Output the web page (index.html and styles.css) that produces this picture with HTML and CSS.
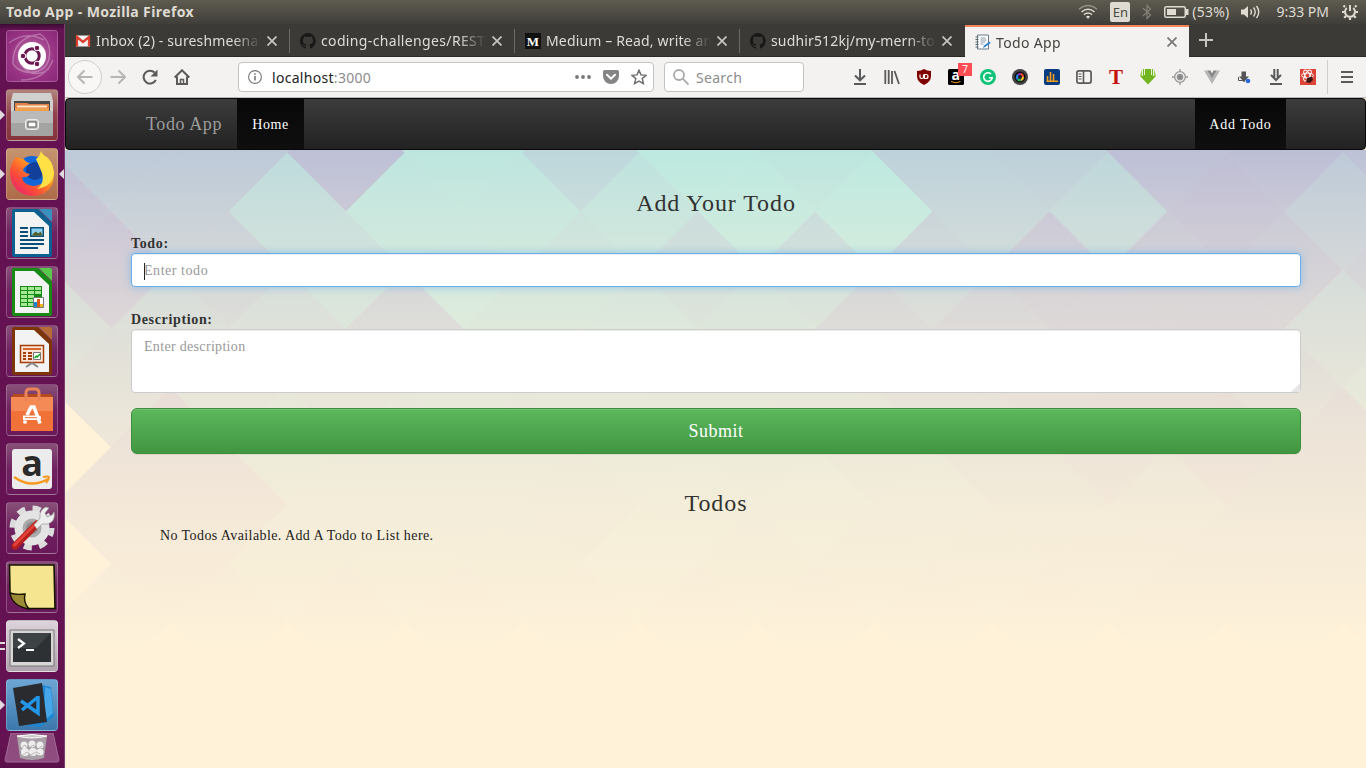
FILE: index.html
```html
<!DOCTYPE html>
<html lang="en">
<head>
<meta charset="utf-8">
<title>Todo App</title>
<link rel="stylesheet" href="styles.css">
</head>
<body>
<header class="panel">
  <span class="panel-title">Todo App - Mozilla Firefox</span>
  <div class="indicators">
    <svg width="20" height="16" viewBox="0 0 20 16" fill="none" stroke="#dfdbd2" stroke-width="1.5"><path d="M1 5.2Q10-2 19 5.2" opacity=".45"/><path d="M3.5 8Q10 2.700 16.500 8M6 10.700Q10 7.500 14 10.700"/><path d="M8 12.500Q10 11 12 12.500L10 15z" fill="#dfdbd2" stroke="none"/></svg>
    <span class="ind-lang">En</span>
    <svg class="ind-bt" width="10" height="16" viewBox="0 0 10 16" fill="none" stroke="#85827a" stroke-width="1.200"><path d="M1 4l7.500 7L5 14.500v-13L8.500 5 1 12"/></svg>
    <svg class="ind-bat" width="25" height="14" viewBox="0 0 25 14"><rect x=".75" y="1.750" width="20.500" height="10.500" rx="1.500" fill="none" stroke="#dfdbd2" stroke-width="1.500"/><path d="M3 4h9v6H3zM22 4h2.500v6H22z" fill="#dfdbd2"/></svg>
    <span class="ind-pct">(53%)</span>
    <svg class="ind-vol" width="21" height="16" viewBox="0 0 21 16"><path d="M1 5.500h3L8 2v12l-4-3.500H1z" fill="#dfdbd2"/><path d="M10.500 5.500q2 2.500 0 5M13.500 3.500q3.500 4.500 0 9M16.500 2q4.500 6 0 12" fill="none" stroke="#dfdbd2" stroke-width="1.400"/></svg>
    <span class="ind-time">9:33 PM</span>
    <svg class="ind-gear" width="18" height="18" viewBox="-9 -9 18 18" fill="none" stroke="#dfdbd2"><path d="M-3.200-4A5 5 0 1 0 3.200-4M0-7V-1" stroke-width="2"/><path d="M-5-5l-1.500-1.500M5-5l1.500-1.500M-5.500 0H-8M5.500 0H8M-4 4l-1.800 1.800M4 4l1.800 1.800M0 5.500V8" stroke-width="2.200"/></svg>
  </div>
</header>

<div class="desktop">
<nav class="launcher">
  <div class="tile dash"><svg viewBox="0 0 52 52"><g fill="none" stroke="#fff" stroke-opacity=".28" stroke-width="1.500"><path d="M7 34Q6 8 34 4Q46 12 43 29Q39 44 20 42Q11 40 7 34M3 13Q20 0 38 10M15 50Q39 50 47 30M17 37Q28 49 43 39"/></g><circle cx="26" cy="26" r="14" fill="#fff"/><circle cx="26" cy="26" r="7.200" fill="none" stroke="#6a1a50" stroke-width="3"/><g fill="#6a1a50" stroke="#fff"><circle cx="17" cy="26" r="2.800"/><circle cx="31" cy="18" r="2.800"/><circle cx="31" cy="34" r="2.800"/></g></svg></div>
  <div class="tile files"><i class="run"></i><svg viewBox="0 0 52 52"><path d="M7 4h38l2 8v12H5V12z" fill="#d0d0ce"/><path d="M8 12h36v12H8z" fill="#4a4a48"/><path d="M9 14h12l2 1h20v7H9z" fill="#e2804a"/><path d="M11 16.500h30v2H11z" fill="#fbe8c8"/><path d="M9 19h34v4H9z" fill="#f0a04c"/><path d="M5 22h42v24q0 1-1 1H6q-1 0-1-1z" fill="#a4a4a2"/><path d="M5 22h42v12H5z" fill="#bababa"/><rect x="19.500" y="30.500" width="13" height="10" rx="2.500" fill="#c8c8c6" stroke="#eee"/><rect x="22" y="33" width="8" height="5" fill="#fff" stroke="#555"/></svg></div>
  <div class="tile firefox"><i class="run"></i><i class="focus"></i><svg viewBox="0 0 52 52"><defs><linearGradient id="fx" x1="1" y1="0" x2="0" y2="1"><stop offset="0" stop-color="#ffd93b"/><stop offset=".35" stop-color="#ff9a1f"/><stop offset=".65" stop-color="#fb4b38"/><stop offset="1" stop-color="#e31587"/></linearGradient></defs><circle cx="26" cy="24" r="16" fill="#1267d8"/><circle cx="29" cy="23" r="9" fill="#123f99"/><path d="M10 9q-6 7-6 17 2 20 22 22 21-1 22-21 0-6-3-10-1 20-18 21-10-1-11-9 5 1 8-3-6-1-7-4 0-2 7-7-5-1-6-4l-5-1z" fill="url(#fx)"/><path d="M35 3q-1 5-5 8 4 9 6 14 3 10-5 16 17-3 17-17Q46 11 39 8q-3-2-4-5" fill="#ffe045"/></svg></div>
  <div class="tile"><svg viewBox="0 0 52 52"><path d="M6 4q0-2 2-2h24l14 14v32q0 2-2 2H8q-2 0-2-2z" fill="#0d6191"/><path d="M9 5h19l15 14v28H9z" fill="#f3f3f3"/><path d="M33 2h11q2 0 2 2v11z" fill="#3790bd"/><g stroke="#0a4f78" stroke-width="2"><path d="M14 21h8M14 25h8M14 29h8M14 33h24M14 37h24M14 41h18"/></g><path d="M24 20h14v10H24z" fill="#0a4f78"/><path d="M25.500 21.500h11v7h-11z" fill="#8bd0ef"/><path d="M25.500 28.500l4-4 3 2 2-2 2 4z" fill="#565c20"/></svg></div>
  <div class="tile"><svg viewBox="0 0 52 52"><path d="M6 4q0-2 2-2h24l14 14v32q0 2-2 2H8q-2 0-2-2z" fill="#178a14"/><path d="M9 5h19l15 14v28H9z" fill="#f3f3f3"/><path d="M33 2h11q2 0 2 2v11z" fill="#58c94a"/><path d="M14 20h22v21H14z" fill="#168b14"/><g fill="#a5e898"><path d="M15 21h6v3h-6zM22 21h6v3h-6zM29 21h6v3h-6zM15 25h6v3h-6zM22 25h6v3h-6zM29 25h6v3h-6zM15 29h6v3h-6zM22 29h6v3h-6zM15 33h6v3h-6zM22 33h6v3h-6zM15 37h6v3h-6zM22 37h6v3h-6z"/></g><path d="M27.500 31.500h10v10h-10z" fill="#fff" stroke="#777"/><path d="M28 36h3v5h-3z" fill="#1787d1"/><path d="M31 33h3v8h-3z" fill="#d85c16"/><path d="M34 38h3v3h-3z" fill="#eeb620"/></svg></div>
  <div class="tile"><svg viewBox="0 0 52 52"><path d="M6 4q0-2 2-2h24l14 14v32q0 2-2 2H8q-2 0-2-2z" fill="#7d3508"/><path d="M9 5h19l15 14v28H9z" fill="#f3f3f3"/><path d="M33 2h11q2 0 2 2v11z" fill="#b66b38"/><path d="M14.500 20.500h23v17h-23z" fill="#fce5d8" stroke="#a33e08" stroke-width="1.500"/><path d="M17 24h18" stroke="#d56b28" stroke-width="2"/><path d="M17 28h3M22 28h4M17 31h3M22 31h4M17 34h3M22 34h4" stroke="#a33e08" stroke-width="2"/><path d="M27.500 27.500h7v7h-7z" fill="#fff" stroke="#777"/><path d="M28.500 33l2-2 1 1 2.500-3" fill="none" stroke="#17a52a" stroke-width="1.500"/><path d="M20 42l6-4 6 4" fill="none" stroke="#888" stroke-width="2"/></svg></div>
  <div class="tile"><svg viewBox="0 0 52 52"><path d="M5 13l3-3h37l2 3z" fill="#b54a1e"/><path d="M5 13h42v34H5z" fill="#f07238"/><path d="M5 13h42v14H5z" fill="#f48a55"/><path d="M20 17V9q0-4 4-4h5q4 0 4 4v8" fill="none" stroke="#e98459" stroke-width="3"/><path d="M18.500 39.500l1-3M24 23h4l5 13.500M33 36.500l1 3M21 31l4-8" fill="none" stroke="#fff" stroke-width="3.500"/><path d="M17 31.500h15q3 0 3 2.200t-3 2.200H17z" fill="#fff"/><path d="M19 33.200h12v1H19z" fill="#f07238"/></svg></div>
  <div class="tile"><svg viewBox="0 0 52 52"><rect x="6" y="6" width="40" height="40" rx="3" fill="#ececec"/><text x="26" y="33" font-size="36" class="amz" text-anchor="middle">a</text><path d="M8 34q17 12 34 2" fill="none" stroke="#f69a1f" stroke-width="2.600"/><path d="M37 34q5-1 6 0 0 3-3 6" fill="none" stroke="#f69a1f" stroke-width="2"/></svg></div>
  <div class="tile"><svg viewBox="0 0 52 52"><circle cx="26" cy="26" r="19.500" fill="none" stroke="#dcdcdc" stroke-width="6" stroke-dasharray="8 7.310"/><circle cx="26" cy="26" r="13.500" fill="#aaa" stroke="#e4e4e4" stroke-width="8"/><circle cx="26" cy="26" r="6" fill="#8a8a8a"/><path d="M9 44L31 22" stroke="#b7201d" stroke-width="7" stroke-linecap="round"/><path d="M8.500 43L30 21.500" stroke="#e3423a" stroke-width="3" stroke-linecap="round"/><path d="M28 23l6-7q-1-8 6-11l3 1-4 5 2 4 5-2 2-3q2 9-6 12l-6 0-5 5z" fill="#eee" stroke="#999" stroke-width=".7"/></svg></div>
  <div class="tile"><svg viewBox="0 0 52 52"><path d="M3.500 4h44.500l1 43.500H22L4 32z" fill="#f5e590" stroke="#151200" stroke-width="1.600"/><path d="M4 32q6 2 15 1-2 8 4 15Q6 45 4 32" fill="#9b8b35" stroke="#151200" stroke-width="1.400"/></svg></div>
  <div class="tile terminal"><i class="run two"></i><svg viewBox="0 0 52 52"><path d="M4 10h44v36H4z" fill="#d7d5d5" stroke="#777"/><path d="M7 13h38v29H7z" fill="#2d3133"/><path d="M7 13h38L30 28H7z" fill="#3d4244"/><path d="M12 19l6 4.500-6 4.500M20 30h8" stroke="#fff" stroke-width="2.200" fill="none"/></svg></div>
  <div class="tile code"><i class="run"></i><svg viewBox="0 0 52 52"><path d="M36 6l9 2 3 30-14 10-17-2 20-5z" fill="#1f85cf"/><path d="M39 8l6 2 2 24-9 8z" fill="#46a6e8"/><path d="M7 9l29-5 5 39-28 4z" fill="#2a2b2f"/><path d="M32 17v17L15 22M32 18L16 31" fill="none" stroke="#2396e8" stroke-width="3.500"/></svg></div>
  <div class="trash"><svg viewBox="0 0 56 30"><path d="M7 0h42l6 27q0 2-2 2H3q-2 0-2-2z" fill="#8e4c7f" stroke="#a36b96"/><path d="M13 3h30l-3 22q-12 4-24 0z" fill="#a99fa6"/><path d="M13 3q15-3 30 0-15 4-30 0" fill="#ccc" stroke="#fff"/><g fill="#eee"><circle cx="20" cy="12" r="3.500"/><circle cx="28" cy="11" r="3.500"/><circle cx="36" cy="12" r="3.500"/><circle cx="21" cy="19" r="4"/><circle cx="29" cy="19" r="4"/><circle cx="36" cy="19" r="3.500"/></g><path d="M17 15l4-3 3 4 5-4 5 4 4-3M19 22l4-3 4 3 5-3 4 2" fill="none" stroke="#aaa" stroke-width=".8"/></svg></div>
</nav>

<main class="window">
  <div class="tabs">
    <div class="tab">
      <svg class="fav" viewBox="0 0 16 16"><path d="M1 2.500h14v11H1z" fill="#f4f4f4"/><path d="M2 13.500V4l6 5 6-5v9.500" fill="none" stroke="#d9402f" stroke-width="2.300"/></svg>
      <span class="tab-text">Inbox (2) - sureshmeena5</span><svg class="x" viewBox="0 0 10 10"><path d="M.5.5l9 9M9.500.5l-9 9"/></svg>
    </div>
    <div class="tab">
      <svg class="fav" viewBox="0 0 16 16"><use href="#gh"/></svg>
      <span class="tab-text wide">coding-challenges/REST-</span><svg class="x" viewBox="0 0 10 10"><path d="M.5.5l9 9M9.500.5l-9 9"/></svg>
    </div>
    <div class="tab">
      <svg class="fav" viewBox="0 0 16 16"><path d="M0 0h16v16H0z" fill="#111"/><text x="8" y="12.500" text-anchor="middle" class="med">M</text></svg>
      <span class="tab-text">Medium – Read, write an</span><svg class="x" viewBox="0 0 10 10"><path d="M.5.5l9 9M9.500.5l-9 9"/></svg>
    </div>
    <div class="tab">
      <svg class="fav" viewBox="0 0 16 16"><path id="gh" d="M8 0a8 8 0 0 0-2.500 15.600c.4 0 .5-.2.500-.4v-1.500c-2.200.5-2.700-1-2.700-1-.4-.9-.9-1.200-.9-1.200-.7-.5.100-.5.100-.5.800.100 1.200.8 1.200.8.700 1.200 1.900.9 2.300.7.100-.5.300-.9.500-1.100-1.800-.2-3.600-.9-3.600-4 0-.9.300-1.600.8-2.100-.100-.2-.4-1 .100-2.100 0 0 .7-.2 2.200.8a7.600 7.600 0 0 1 4 0c1.500-1 2.200-.8 2.200-.8.4 1.100.2 1.900.100 2.100.5.6.8 1.300.8 2.200 0 3.100-1.900 3.700-3.700 3.900.3.300.6.800.6 1.500v2.200c0 .2.100.5.500.4A8 8 0 0 0 8 0z" fill="#191717"/></svg>
      <span class="tab-text">sudhir512kj/my-mern-to</span><svg class="x" viewBox="0 0 10 10"><path d="M.5.5l9 9M9.500.5l-9 9"/></svg>
    </div>
    <div class="tab active">
      <svg class="fav" viewBox="0 0 16 16"><path d="M2.500 1h11v14h-11z" fill="#fff" stroke="#677888"/><path d="M.5 3h3M.5 5.500h3M.5 8h3M.5 10.500h3M.5 13h3" stroke="#566"/><path d="M5.500 4h5M5.500 6h6M5.500 8h5M5.500 10h3" stroke="#89a"/><path d="M8 14l1-2.500 5.500-4 1.200 1.500-5.500 4z" fill="#3284cf"/></svg>
      <span class="tab-text wide">Todo App</span><svg class="x" viewBox="0 0 10 10"><path d="M.5.5l9 9M9.500.5l-9 9"/></svg>
    </div>
    <svg class="plus" viewBox="0 0 14 14"><path d="M7 0v14M0 7h14"/></svg>
  </div>

  <div class="toolbar">
    <span class="back"><svg viewBox="0 0 16 16"><path d="M15.500 8H1M7.500 1.500L1 8l6.500 6.500"/></svg></span>
    <svg class="nav-ic fwd" viewBox="0 0 16 16"><path d="M.5 8H15M8.500 1.500L15 8l-6.500 6.500"/></svg>
    <svg class="nav-ic dark" viewBox="0 0 16 16"><path d="M13.800 11A6.400 6.400 0 1 1 12.500 3.500"/><path d="M15.500 .5V7.500H8.500z" fill="#5a5a5a" stroke="none"/></svg>
    <svg class="nav-ic dark" viewBox="0 0 16 16"><path d="M.7 8.500L8 1.300l7.300 7.200M3 7.500V15h10V7.500" /><path d="M6.500 15v-4.500h3V15" stroke-width="1.500"/></svg>
    <div class="url">
      <svg class="info" viewBox="0 0 14 14"><circle cx="7" cy="7" r="6.400"/><path d="M7 6v4.500M7 3.200v1.600" stroke-width="1.600"/></svg>
      <span class="address">localhost<span class="port">:3000</span></span>
      <svg class="dots" viewBox="0 0 16 4"><circle cx="2" cy="2" r="1.900"/><circle cx="8" cy="2" r="1.900"/><circle cx="14" cy="2" r="1.900"/></svg>
      <svg class="pocket" viewBox="0 0 16 14"><path d="M1.500 0h13Q16 0 16 1.500V6A8 8 0 0 1 0 6V1.500Q0 0 1.500 0z" fill="#858585"/><path d="M4 4.800l4 3.800 4-3.800" fill="none" stroke="#fff" stroke-width="2" stroke-linecap="round"/></svg>
      <svg class="star" viewBox="0 0 16 16"><path d="M8 1.200l2 4.700 5 .4-3.800 3.300 1.200 5L8 12l-4.400 2.600 1.200-5L1 6.300l5-.4z"/></svg>
    </div>
    <div class="search"><svg class="lens" viewBox="0 0 16 16"><circle cx="6" cy="6" r="5"/><path d="M9.700 9.700L15.500 15.500"/></svg>Search</div>
    <div class="tools">
      <svg viewBox="0 0 16 16" class="ln"><path d="M8 0v11M3 6.500L8 11.300l5-4.800M2 15h12"/></svg>
      <svg viewBox="0 0 16 16" class="ln"><path d="M1.300 1v14M4.700 1v14M8 2v13M10.500 2l4.500 13" stroke-width="1.800"/></svg>
      <svg viewBox="0 0 16 16"><path d="M8 0q3 2 7 2v5q0 6-7 9-7-3-7-9V2q4 0 7-2" fill="#800000"/><path d="M4 5.500v2.500q0 1.500 1.700 1.500T7.500 8V5.500M8.500 9.500v-4H10q2 0 2 2t-2 2z" fill="none" stroke="#fff" stroke-width="1.200"/></svg>
      <span class="badged"><svg viewBox="0 0 16 16"><rect width="16" height="16" rx="1.500" fill="#000"/><text x="7.700" y="11" text-anchor="middle" class="amz2">a</text><path d="M3 12.500q5 2.600 9.500 0" stroke="#f69a1f" fill="none"/></svg><b class="badge">7</b></span>
      <svg viewBox="0 0 16 16"><circle cx="8" cy="8" r="8" fill="#11c37a"/><path d="M11 5A4.300 4.300 0 1 0 12.200 8.800H9" fill="none" stroke="#fff" stroke-width="1.600"/></svg>
      <svg viewBox="0 0 16 16"><circle cx="8" cy="8" r="8" fill="#454547"/><circle cx="8" cy="8" r="5.500" fill="#111"/><path d="M8 8L5.500 5a4 4 0 0 1 3.500-1z" fill="#aa2dd8"/><path d="M8 8l1-4a4 4 0 0 1 3 4z" fill="#f04c30"/><path d="M8 8h4a4 4 0 0 1-3 4z" fill="#f5c72b"/><path d="M8 8l1 4a4 4 0 0 1-4-1z" fill="#22b765"/><path d="M8 8l-3 3a4 4 0 0 1 .5-6z" fill="#2583ec"/><circle cx="8" cy="8" r="2" fill="#222"/></svg>
      <svg viewBox="0 0 16 16"><rect width="16" height="16" rx="2" fill="#073b80"/><path d="M3.500 12V7M6.500 12V3M9.500 12V5M2.500 12.200H14" stroke="#f39d1d" stroke-width="1.600"/></svg>
      <svg viewBox="0 0 16 16" class="ln"><rect x=".9" y="1.900" width="14.200" height="12.200" rx="2" stroke-width="1.700"/><path d="M7.500 2v12" stroke-width="1.600"/><path d="M2.500 5h3M2.500 7.500h3M2.500 10h3" stroke-width="1"/></svg>
      <svg viewBox="0 0 16 16"><text x="8" y="15" text-anchor="middle" class="tee">T</text></svg>
      <svg viewBox="0 0 16 16"><path d="M3 0h10v7h3l-8 8.500L0 7h3z" fill="#72b522"/><path d="M0 7l2-7v7zM16 7l-2-7v7z" fill="#95ce48"/><path d="M4.500 0v6M11.500 0v6" stroke="#e8f6d2"/></svg>
      <svg viewBox="0 0 16 16" fill="none" stroke="#999" stroke-width="1.300"><circle cx="8" cy="8" r="5.300"/><circle cx="8" cy="8" r="2.700" fill="#888"/><path d="M8 0v3M8 13v3M0 8h3M13 8h3"/></svg>
      <svg viewBox="0 0 16 16"><path d="M0 1.500h4l4 7 4-7h4L8 15z" fill="#b5b5b5"/><path d="M3.500 1.500h3L8 4.500l1.500-3h3L8 9z" fill="#858585"/></svg>
      <svg viewBox="0 0 16 16"><path d="M5.500 2.500h4.500v5h3l-5 5.500L3 7.500h2.500z" fill="#555"/><path d="M2.500 8v3.500H8V13" stroke="#555" fill="none"/><circle cx="12" cy="12" r="2.300" fill="#2768e8"/></svg>
      <svg viewBox="0 0 16 16" class="ln"><path d="M6.300 0v10M9.700 0v10M3 6l5 5 5-5M2 15h12"/></svg>
      <svg viewBox="0 0 16 16"><path d="M0 0h16v16H0z" fill="#dc4437"/><g fill="none" stroke="#fff"><ellipse cx="7.500" cy="6.500" rx="6" ry="2.400"/><ellipse cx="7.500" cy="6.500" rx="6" ry="2.400" transform="rotate(60 7.500 6.500)"/><ellipse cx="7.500" cy="6.500" rx="6" ry="2.400" transform="rotate(120 7.500 6.500)"/></g><path d="M7 9l5-1.500 1 3.500-3 3-4-1z" fill="#3b1512"/></svg>
    </div>
    <svg class="menu" viewBox="0 0 12 12"><path d="M0 1h12M0 6h12M0 11h12"/></svg>
  </div>

  <section class="page">
    <svg class="backdrop" width="1301" height="618" viewBox="65 150 1301 618">
      <defs><linearGradient id="fade" x1="0" y1="0" x2="0" y2="1">
        <stop offset="0" stop-color="#fff2d9" stop-opacity=".22"/>
        <stop offset=".11" stop-color="#fff2d9" stop-opacity=".39"/>
        <stop offset=".2" stop-color="#fff2d9" stop-opacity=".51"/>
        <stop offset=".31" stop-color="#fff2d9" stop-opacity=".64"/>
        <stop offset=".45" stop-color="#fff2d9" stop-opacity=".78"/>
        <stop offset=".6" stop-color="#fff2d9" stop-opacity=".88"/>
        <stop offset=".75" stop-color="#fff2d9" stop-opacity=".96"/>
        <stop offset=".81" stop-color="#fff2d9" stop-opacity="1"/>
      </linearGradient></defs>
      <g id="diamonds"></g>
      <rect x="65" y="150" width="1301" height="618" fill="url(#fade)"/>
      <path d="M65 402L111 447 65 493zM65 518L111 564 65 610z" fill="#fff2d9"/>
    </svg>
    <div class="navbar">
      <span class="brand">Todo App</span>
      <a class="link">Home</a>
      <a class="link add">Add Todo</a>
    </div>
    <div class="container">
      <h3 class="h-add">Add Your Todo</h3>
      <label class="lbl">Todo:</label>
      <div class="field focused">Enter todo</div>
      <label class="lbl second">Description:</label>
      <div class="field area">Enter description<svg class="grip" viewBox="0 0 9 9"><path d="M0 9L9 0v9z" fill="#e6e6e6"/></svg></div>
      <div class="submit">Submit</div>
      <h3 class="h-list">Todos</h3>
      <p class="empty">No Todos Available. Add A Todo to List here.</p>
    </div>
  </section>
</main>
</div>
<script src="backdrop.js"></script>
</body>
</html>
```
FILE: backdrop.js
```js
// Green channel of each diamond, row by row; alternate rows shift by half a column.
const rows = [
  [188, 190, 190, 226, 226, 228, 230, 200, 200, 178, 178, 178],
  [190, 190, 177, 226, 208, 230, 226, 200, 198, 177, 176, 180],
  [176, 190, 212, 225, 225, 222, 230, 230, 200, 206, 174, 190],
  [172, 190, 212, 224, 218, 207, 208, 195, 177, 178, 178, 184],
  [198, 196, 200, 188, 218, 216, 212, 186, 183, 176, 177, 198],
  [190, 198, 196, 208, 208, 207, 202, 186, 178, 172, 184, 208],
  [180, 168, 206, 202, 202, 208, 206, 198, 186, 172, 170, 176],
  [170, 170, 202, 204, 198, 210, 212, 202, 190, 186, 176, 176],
  [180, 170, 202, 205, 204, 214, 204, 200, 194, 188, 178, 176],
  [178, 178, 178, 180, 190, 184, 184, 182, 180, 176, 176, 176]
];
const half = 58.65;
const group = document.getElementById('diamonds');
rows.forEach((row, n) => row.forEach((g, i) => {
  const j = n - 1;
  const x = 287.3 + half * (2 * i - (j % 2 ? 4 : 3));
  const y = 153 + half * j;
  const p = document.createElementNS('http://www.w3.org/2000/svg', 'path');
  p.setAttribute('d', `M${x - half} ${y}l${half} ${-half} ${half} ${half} ${-half} ${half}z`);
  const c = `rgb(170,${g},${Math.round(213 + (g - 177) * 0.25)})`;
  p.setAttribute('fill', c);
  p.setAttribute('stroke', c);
  p.setAttribute('stroke-width', '.6');
  group.appendChild(p);
}));
```
FILE: styles.css
```css
* { box-sizing: border-box; }
body { margin: 0; width: 1366px; height: 768px; overflow: hidden; font-family: "Noto Sans", "Open Sans", sans-serif; font-size: 14px; }
svg { display: block; flex: none; }

.panel { height: 24px; display: flex; justify-content: space-between; align-items: center; padding-left: 6px; color: #dfdbd2; background: linear-gradient(#5e5b50, #3f3e39); }
.panel-title { font-weight: bold; letter-spacing: .4px; padding-bottom: 1px; }
.indicators { display: flex; align-items: center; padding-right: 7px; }
.ind-lang { margin-left: 12px; width: 20px; height: 20px; background: #dfdbd2; color: #4b4943; border-radius: 2px; text-align: center; line-height: 20px; font-size: 13px; }
.ind-bt { margin-left: 12px; }
.ind-bat { margin-left: 12px; }
.ind-pct { margin-left: 3px; letter-spacing: .2px; padding-bottom: 1px; }
.ind-vol { margin-left: 11px; }
.ind-time { margin-left: 15px; padding-bottom: 1px; }
.ind-gear { margin-left: 12px; }

.desktop { display: flex; height: 744px; }
.launcher { width: 65px; flex: none; background: linear-gradient(#3c0a32, #641252 6px, #641252 97%, #5a104a); border-right: 1px solid #7d3d6e; padding-top: 6px; display: flex; flex-direction: column; align-items: center; gap: 7px; padding-right: 1px; }
.tile { position: relative; width: 52px; height: 52px; border-radius: 4px; border: 1px solid rgba(255,255,255,.22); background: linear-gradient(#875078, #702260 50%, #6a1859); flex: none; }
.tile svg { width: 52px; height: 52px; margin: -1px; overflow: visible; }
.dash { background: radial-gradient(circle, #c98cbb, #9a3585 60%, #8a2878); }
.files { background: linear-gradient(#b0847c, #92404a 50%, #86343c); }
.firefox { background: linear-gradient(#c69470, #ae6a48); }
.terminal { background: linear-gradient(#ddd3da, #b0a3ad); }
.code { background: linear-gradient(#6da6d4, #3c78ac); }
.run { position: absolute; left: -7px; top: 20px; border: 5px solid transparent; border-left-color: #e0d9de; border-right: 0; }
.two { border: 0; width: 5px; height: 8px; top: 21px; border-top: 2px solid #e0d9de; border-bottom: 2px solid #e0d9de; }
.focus { position: absolute; right: -7px; top: 20px; border: 5px solid transparent; border-right-color: #e0d9de; border-left: 0; }
.trash { width: 56px; height: 30px; margin-top: -5px; }
.amz { font-family: "Open Sans", sans-serif; font-weight: bold; fill: #2a2a2a; }
.amz2 { font: bold 14px "Open Sans", sans-serif; fill: #fff; }
.med { font: bold 13px "Liberation Serif", serif; fill: #fff; }
.tee { font: bold 21px "Liberation Serif", serif; fill: #c4120f; }

.window { width: 1301px; display: flex; flex-direction: column; }
.tabs { height: 33px; flex: none; display: flex; background: #3b3a36; border-bottom: 1px solid #2a2926; border-top: 1px solid #3b3a36; color: #dedcd8; }
.tab { width: 225px; display: flex; align-items: center; padding-left: 10px; position: relative; }
.tab:not(.active):not(:nth-child(4))::after { content: ""; position: absolute; right: 0; top: 4px; height: 24px; width: 1px; background: #6b6a66; }
.fav { width: 16px; height: 16px; }
.tab-text { width: 167px; margin-left: 5px; overflow: hidden; white-space: nowrap; letter-spacing: .15px; -webkit-mask-image: linear-gradient(90deg, #000 82%, transparent 99%); mask-image: linear-gradient(90deg, #000 82%, transparent 99%); }
.wide { letter-spacing: .35px; }
.x { width: 10px; height: 10px; margin-left: 4px; fill: none; stroke: #c8c6c2; stroke-width: 1.700; }
.active { background: #f4f2f1; border-top: 2px solid #f4835a; color: #45433f; height: 32px; width: 224px; }
.active .x { stroke: #777; }
.plus { width: 14px; height: 14px; margin: 8px 0 0 10px; stroke: #c8c6c2; stroke-width: 2; }

.toolbar { height: 41px; flex: none; display: flex; align-items: center; background: #f4f2f1; border-bottom: 1px solid #bcbab8; padding-left: 3px; }
.back { width: 34px; height: 34px; border-radius: 50%; border: 1px solid #d0cecd; display: flex; align-items: center; justify-content: center; background: #f8f7f6; }
.back svg, .nav-ic { width: 16px; height: 16px; fill: none; stroke: #b8b6b5; stroke-width: 2; }
.fwd { margin-left: 8px; }
.nav-ic.dark { stroke: #5a5a5a; margin-left: 16px; }
.url { margin-left: 48px; width: 416px; height: 30px; background: #fff; border: 1px solid #c4c2c0; border-radius: 4px; display: flex; align-items: center; padding: 0 6px 0 9px; color: #222; }
.info { width: 14px; height: 14px; fill: none; stroke: #777; stroke-width: 1.100; }
.address { margin-left: 10px; flex: 1; letter-spacing: .3px; }
.port { color: #8c8c8c; }
.dots { width: 16px; height: 4px; fill: #777; margin-right: 12px; }
.pocket { width: 16px; height: 14px; margin-right: 12px; }
.star { width: 16px; height: 16px; fill: none; stroke: #6f6f6f; stroke-width: 1.500; }
.search { margin-left: 10px; width: 140px; height: 30px; background: #fff; border: 1px solid #c4c2c0; border-radius: 4px; display: flex; align-items: center; padding-left: 8px; gap: 7px; color: #8c8c8c; letter-spacing: .3px; }
.lens { width: 16px; height: 16px; fill: none; stroke: #aaa; stroke-width: 1.800; }
.tools { margin-left: 48px; display: flex; gap: 16px; padding-right: 11px; border-right: 1px solid #d0cecd; height: 34px; align-items: center; }
.tools svg { width: 16px; height: 16px; overflow: visible; }
.ln { fill: none; stroke: #5a5a5a; stroke-width: 2; }
.badged { position: relative; }
.badge { position: absolute; left: 10px; top: -6px; width: 14px; height: 13px; background: #fb4d53; color: #fff; font: 10px/12px "Noto Sans", sans-serif; text-align: center; }
.menu { width: 12px; height: 12px; margin-left: 13px; stroke: #5a5a5a; stroke-width: 1.800; }

.page { position: relative; height: 670px; font-family: "Liberation Serif", serif; color: #333; background: #fff2d9; }
.backdrop { position: absolute; left: 0; top: 52px; }
.navbar { position: relative; height: 52px; border: 1px solid #080808; border-radius: 4px; background: linear-gradient(#3c3c3c, #222); display: flex; align-items: stretch; line-height: 50px; padding: 0 79px 0 65px; }
.brand { font-size: 18px; color: #9d9d9d; padding-left: 15px; width: 106px; letter-spacing: .6px; }
.link { width: 67px; text-align: center; color: #fff; font-size: 14px; letter-spacing: .6px; background: linear-gradient(#080808, #0f0f0f); line-height: 52px; }
.add { width: 91px; margin-left: auto; letter-spacing: .8px; }
.container { position: relative; width: 1170px; margin-left: 66px; padding-top: 40px; }
.h-add, .h-list { margin: 0; font-weight: normal; font-size: 24px; line-height: 26px; text-align: center; letter-spacing: .9px; }
.lbl { display: block; font-weight: bold; line-height: 20px; margin-top: 17px; padding-top: 1px; margin-bottom: -1px; letter-spacing: .65px; }
.field { height: 34px; background: #fff; border: 1px solid #ccc; border-radius: 4px; padding: 7px 12px 5px; line-height: 20px; color: #999; letter-spacing: .55px; box-shadow: inset 0 1px 1px rgba(0,0,0,.075); }
.focused { border-color: #66afe9; box-shadow: inset 0 1px 1px rgba(0,0,0,.075), 0 0 8px rgba(102,175,233,.6); }
.focused::before { content: ""; display: inline-block; width: 1px; height: 17px; background: #222; vertical-align: middle; margin-right: -1px; }
.second { margin-top: 22px; }
.area { height: 64px; position: relative; letter-spacing: .32px; }
.grip { position: absolute; right: 0; bottom: 0; width: 9px; height: 9px; }
.submit { margin-top: 15px; height: 46px; border: 1px solid #3e8f3e; border-radius: 6px; background: linear-gradient(#5cb85c, #419641); color: #fff; font-size: 18px; line-height: 44px; text-align: center; letter-spacing: .5px; box-shadow: inset 0 1px 0 rgba(255,255,255,.15), 0 1px 1px rgba(0,0,0,.075); }
.h-list { margin-top: 36px; }
.empty { margin: 10px 0 0 29px; line-height: 20px; color: #222; letter-spacing: .41px; }
```
